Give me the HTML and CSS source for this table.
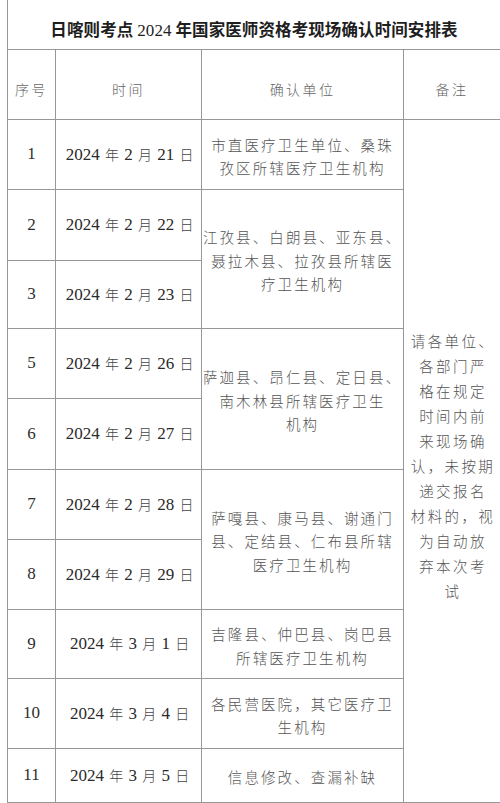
FILE: index.html
```html
<!DOCTYPE html>
<html lang="zh-CN">
<head>
<meta charset="utf-8">
<title>日喀则考点2024年国家医师资格考现场确认时间安排表</title>
<link rel="stylesheet" href="styles.css">
</head>
<body>
<table class="sheet">
  <colgroup>
    <col class="c-no">
    <col class="c-date">
    <col class="c-unit">
    <col class="c-note">
  </colgroup>
  <tr class="r-title">
    <td class="title" colspan="4">日喀则考点 <span class="num">2024</span> 年国家医师资格考现场确认时间安排表</td>
  </tr>
  <tr class="r-head">
    <td class="head">序号</td>
    <td class="head">时间</td>
    <td class="head">确认单位</td>
    <td class="head">备注</td>
  </tr>
  <tr class="r70">
    <td class="no">1</td>
    <td class="date">2024 <span class="cj">年</span> 2 <span class="cj">月</span> 21 <span class="cj">日</span></td>
    <td class="unit">市直医疗卫生单位、桑珠<br>孜区所辖医疗卫生机构</td>
    <td class="note" rowspan="11">请各单位、<br>各部门严<br>格在规定<br>时间内前<br>来现场确<br>认，未按期<br>递交报名<br>材料的，视<br>为自动放<br>弃本次考<br>试</td>
  </tr>
  <tr class="r71">
    <td class="no">2</td>
    <td class="date">2024 <span class="cj">年</span> 2 <span class="cj">月</span> 22 <span class="cj">日</span></td>
    <td class="unit" rowspan="2">江孜县、白朗县、亚东县、<br>聂拉木县、拉孜县所辖医<br>疗卫生机构</td>
  </tr>
  <tr class="r68">
    <td class="no">3</td>
    <td class="date">2024 <span class="cj">年</span> 2 <span class="cj">月</span> 23 <span class="cj">日</span></td>
  </tr>
  <tr class="r70">
    <td class="no">5</td>
    <td class="date">2024 <span class="cj">年</span> 2 <span class="cj">月</span> 26 <span class="cj">日</span></td>
    <td class="unit" rowspan="2">萨迦县、昂仁县、定日县、<br>南木林县所辖医疗卫生<br>机构</td>
  </tr>
  <tr class="r71">
    <td class="no">6</td>
    <td class="date">2024 <span class="cj">年</span> 2 <span class="cj">月</span> 27 <span class="cj">日</span></td>
  </tr>
  <tr class="r70">
    <td class="no">7</td>
    <td class="date">2024 <span class="cj">年</span> 2 <span class="cj">月</span> 28 <span class="cj">日</span></td>
    <td class="unit" rowspan="2">萨嘎县、康马县、谢通门<br>县、定结县、仁布县所辖<br>医疗卫生机构</td>
  </tr>
  <tr class="r70">
    <td class="no">8</td>
    <td class="date">2024 <span class="cj">年</span> 2 <span class="cj">月</span> 29 <span class="cj">日</span></td>
  </tr>
  <tr class="r69">
    <td class="no">9</td>
    <td class="date">2024 <span class="cj">年</span> 3 <span class="cj">月</span> 1 <span class="cj">日</span></td>
    <td class="unit">吉隆县、仲巴县、岗巴县<br>所辖医疗卫生机构</td>
  </tr>
  <tr class="r70">
    <td class="no">10</td>
    <td class="date">2024 <span class="cj">年</span> 3 <span class="cj">月</span> 4 <span class="cj">日</span></td>
    <td class="unit">各民营医院，其它医疗卫<br>生机构</td>
  </tr>
  <tr class="r54">
    <td class="no">11</td>
    <td class="date">2024 <span class="cj">年</span> 3 <span class="cj">月</span> 5 <span class="cj">日</span></td>
    <td class="unit">信息修改、查漏补缺</td>
  </tr>
</table>
</body>
</html>
```

FILE: styles.css
```css
html, body {
  margin: 0;
  padding: 0;
  background: #fff;
}

body {
  font-family: "Noto Sans CJK SC", "Liberation Serif", serif;
  overflow: hidden;
}

.sheet {
  margin-left: 7px;
  width: 493px;
  table-layout: fixed;
  border-collapse: collapse;
}

.c-no { width: 48px; }
.c-date { width: 146px; }
.c-unit { width: 202px; }
.c-note { width: 97px; }

.sheet td {
  border: 1px solid #979797;
  padding: 0;
  text-align: center;
  vertical-align: middle;
}

.num {
  font-family: "Liberation Serif", serif;
}

.r-title { height: 49px; }
.r-head { height: 70px; }
.r70 { height: 70px; }
.r71 { height: 71px; }
.r68 { height: 68px; }
.r69 { height: 69px; }
.r54 { height: 54px; }

.sheet td.title {
  border-top: none;
  padding-top: 10px;
  font-size: 16.5px;
  font-weight: 700;
  color: #1e1e1e;
  letter-spacing: 0.1px;
}

.title .num {
  font-weight: 400;
  font-size: 17px;
}

.sheet td.head {
  padding-top: 9px;
  font-size: 14px;
  font-weight: 300;
  letter-spacing: 2.4px;
  color: #666;
}

.sheet td.no {
  font-family: "Liberation Serif", serif;
  font-size: 17px;
  color: #2e2e2e;
}

.sheet td.date {
  padding-left: 2px;
  font-family: "Liberation Serif", "Noto Sans CJK SC", serif;
  font-size: 17px;
  word-spacing: 1px;
  color: #2a2a2a;
  white-space: nowrap;
}

.date .cj {
  font-family: "Noto Sans CJK SC", sans-serif;
  font-size: 14px;
  font-weight: 300;
  color: #444;
}

.sheet td.unit {
  padding-top: 4px;
  font-size: 14.5px;
  font-weight: 300;
  letter-spacing: 2.1px;
  line-height: 23.5px;
  color: #555;
  white-space: nowrap;
}

.sheet td.note {
  padding-left: 2px;
  padding-top: 10px;
  font-size: 14.5px;
  font-weight: 300;
  letter-spacing: 2.4px;
  line-height: 25px;
  color: #555;
  white-space: nowrap;
}
```
